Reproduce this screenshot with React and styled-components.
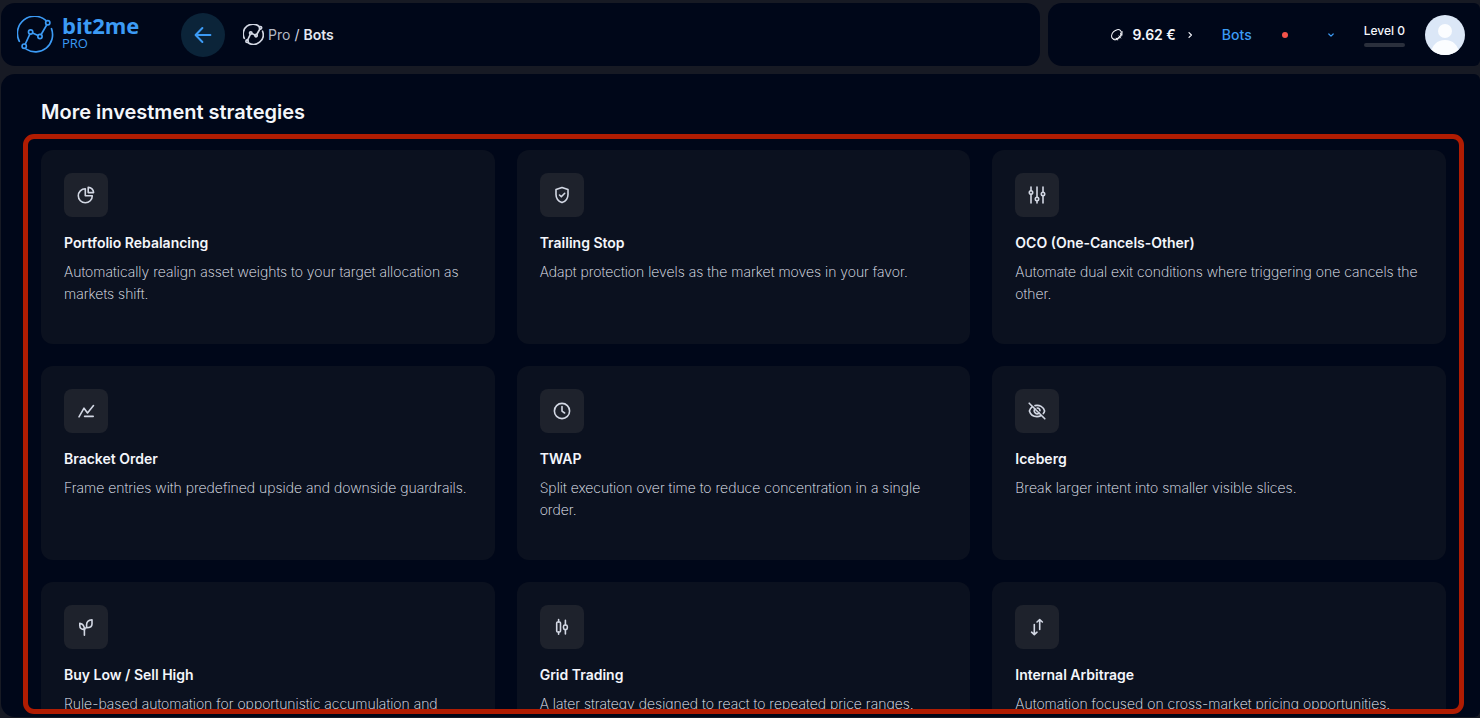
import React from "react";
import styled, { createGlobalStyle } from "styled-components";

const GlobalStyle = createGlobalStyle`
  * {
    box-sizing: border-box;
  }
  body {
    margin: 0;
    background-color: #171a24;
    color: #f4f6fb;
    font-family: Inter, "Noto Sans", sans-serif;
    font-size: 14px;
  }
  h1, h2, p, ul {
    margin: 0;
    padding: 0;
  }
  button {
    border: none;
    background: none;
    padding: 0;
    color: inherit;
    font: inherit;
    cursor: pointer;
  }
  a {
    color: inherit;
    text-decoration: none;
  }
`;

const MyPage = styled.div`
  display: flex;
  flex-direction: column;
  gap: 8px;
  height: 100vh;
  padding: 3px 0 1px 1px;
`;
const MyHeader = styled.header`
  display: grid;
  grid-template-columns: minmax(0, 1fr) 29.2%;
  gap: 8px;
`;
const MyBar = styled.div`
  display: flex;
  align-items: center;
  height: 63px;
  background-color: #000719;
  border-radius: 14px;
`;
const MyNavBar = styled(MyBar)`
  padding: 0 16px;
`;
const MyUserBar = styled(MyBar)`
  justify-content: flex-end;
  gap: 20px;
  padding-right: 15px;
  border-radius: 14px 6px 6px 14px;
`;
const MyLogo = styled.a`
  display: flex;
  align-items: center;
  gap: 8px;
  width: 164px;
  color: #3c9bf5;
`;
const MyLogoText = styled.span`
  display: flex;
  flex-direction: column;
  font-family: "Open Sans", "Noto Sans", sans-serif;
`;
const MyLogoName = styled.span`
  font-size: 22px;
  font-weight: 700;
  line-height: 16px;
`;
const MyLogoSub = styled.span`
  font-size: 13px;
  line-height: 20px;
`;
const MyBackButton = styled.button`
  display: flex;
  align-items: center;
  justify-content: center;
  width: 44px;
  height: 44px;
  border-radius: 50%;
  background-color: #0b2439;
  color: #3c9bf5;
`;
const MyCrumbs = styled.nav`
  display: flex;
  align-items: center;
  gap: 4px;
  margin-left: 18px;
  color: #d3d8e4;
`;
const MyCrumb = styled.a`
  color: ${(props) => (props.$current ? "#e4e8f0" : "#b4b9c4")};
  font-weight: ${(props) => (props.$current ? 600 : 400)};
`;
const MyWallet = styled.button`
  display: flex;
  align-items: center;
  gap: 10px;
  margin-right: 8px;
  font-weight: 600;
`;
const MyBotsLink = styled.a`
  color: #3c9bf5;
  font-weight: 500;
`;
const MyIconButton = styled.button`
  display: flex;
  align-items: center;
  justify-content: center;
  width: 26px;
  height: 24px;
  color: #3c9bf5;
`;
const MyDot = styled.span`
  width: 6px;
  height: 6px;
  border-radius: 50%;
  background-color: #f4534a;
`;
const MyLevel = styled.div`
  display: flex;
  flex-direction: column;
  gap: 4px;
  font-size: 12px;
  font-weight: 500;
  line-height: 16px;
`;
const MyLevelBar = styled.span`
  height: 4px;
  border-radius: 2px;
  background-color: #2a2f3c;
`;
const MyAvatar = styled.button`
  width: 40px;
  height: 40px;
  border-radius: 50%;
  overflow: hidden;
`;

const MyMain = styled.main`
  display: flex;
  flex-direction: column;
  flex: 1;
  min-height: 0;
  padding: 24px 16px 3px 22px;
  background-color: #000719;
  border-radius: 14px 6px 6px 14px;
`;
const MyTitle = styled.h1`
  margin-bottom: 8px;
  padding-left: 18px;
  font-size: 20px;
  font-weight: 600;
  line-height: 28px;
`;
const MyFrame = styled.section`
  flex: 1;
  min-height: 0;
  overflow: hidden;
  padding: 11px 13px;
  border: 5px solid #b01c02;
  border-radius: 11px;
`;
const MyGrid = styled.ul`
  display: grid;
  grid-template-columns: repeat(3, minmax(0, 1fr));
  gap: 22px;
  list-style: none;
`;
const MyCard = styled.li`
  min-height: 194px;
  padding: 23px 16px 23px 23px;
  border-radius: 12px;
  background-color: #0b111f;
`;
const MyTile = styled.div`
  display: flex;
  align-items: center;
  justify-content: center;
  width: 44px;
  height: 44px;
  margin-bottom: 16px;
  border-radius: 8px;
  background-color: #1e222c;
  color: #d3d8e4;
`;
const MyCardTitle = styled.h2`
  margin-bottom: 8px;
  font-size: 14px;
  font-weight: 600;
  line-height: 20px;
`;
const MyCardText = styled.p`
  color: #eceffa;
  font-weight: 200;
  line-height: 22px;
`;

const MyStroke = styled.svg`
  flex: none;
  fill: none;
  stroke: currentColor;
  stroke-linecap: round;
  stroke-linejoin: round;
`;

const icons = {
  pie: (
    <>
      <path d="M8.3 2.8A7 7 0 1 0 15.3 9.8H8.3Z" />
      <path d="M11.2 1.4A5.3 5.3 0 0 1 16.6 6.6H11.2Z" />
    </>
  ),
  shield: (
    <>
      <path d="M9 1.5 15 3.6V8.4C15 12.4 12.6 15.2 9 16.6 5.4 15.2 3 12.4 3 8.4V3.6Z" />
      <path d="M6.5 9 8.3 10.8 11.7 7.3" />
    </>
  ),
  sliders: (
    <>
      <path d="M3 1V4.6M3 8.4V17M9 1V11.1M9 14.9V17M15 1V6.1M15 9.9V17" />
      <circle cx="3" cy="6.5" r="1.7" />
      <circle cx="9" cy="13" r="1.7" />
      <circle cx="15" cy="8" r="1.7" />
    </>
  ),
  chart: <path d="M2 14.8 7 6.2 10.5 11 16.5 3.6M7.6 14.4H16.2" />,
  clock: (
    <>
      <circle cx="9" cy="9" r="7.6" />
      <path d="M9 4.6V9.2L11.6 11" />
    </>
  ),
  eyeOff: (
    <>
      <path d="M1.2 1.2 16.8 16.8" />
      <path d="M4.4 4.6C3 5.6 1.9 7.1 1.4 9 2.4 12.4 5.4 14.6 9 14.6 10.3 14.6 11.6 14.3 12.7 13.7" />
      <path d="M7 3.6C11.6 2.6 15.6 5 16.6 9 16.3 10 15.9 10.9 15.3 11.6" />
      <path d="M6.9 6.9A3 3 0 0 0 11.1 11.1M9.2 6A3 3 0 0 1 12 8.8" />
    </>
  ),
  seedling: (
    <>
      <path d="M7.4 17.2V10.6" />
      <path d="M7.4 12C7.4 10.4 8.2 9.8 9.6 9.8V6.6C9.6 4 11.6 2.2 15 1.8V6C15 8.6 13 9.8 9.6 9.8" />
      <path d="M7.4 11.4C7.4 8 5.8 5.8 2.8 5.2V7.4C2.8 9.6 4.6 11.4 7.4 11.4Z" />
    </>
  ),
  candles: (
    <>
      <path d="M5.6 1.6V4M5.6 14V16.2M12.4 2.4V7M12.4 12V16" />
      <rect x="3.7" y="4" width="3.8" height="10" rx="1" />
      <rect x="10.5" y="7" width="3.8" height="4.6" rx="1.6" />
    </>
  ),
  arrows: (
    <>
      <path d="M6.3 6.6V16.6M3.6 14.2 6.3 16.6 9 14.2" />
      <path d="M11.7 11.4V1.6M9 4 11.7 1.6 14.4 4" />
    </>
  ),
};

const strategies = [
  {
    icon: "pie",
    title: "Portfolio Rebalancing",
    descr:
      "Automatically realign asset weights to your target allocation as markets shift.",
  },
  {
    icon: "shield",
    title: "Trailing Stop",
    descr: "Adapt protection levels as the market moves in your favor.",
  },
  {
    icon: "sliders",
    title: "OCO (One-Cancels-Other)",
    descr:
      "Automate dual exit conditions where triggering one cancels the other.",
  },
  {
    icon: "chart",
    title: "Bracket Order",
    descr: "Frame entries with predefined upside and downside guardrails.",
  },
  {
    icon: "clock",
    title: "TWAP",
    descr: "Split execution over time to reduce concentration in a single order.",
  },
  {
    icon: "eyeOff",
    title: "Iceberg",
    descr: "Break larger intent into smaller visible slices.",
  },
  {
    icon: "seedling",
    title: "Buy Low / Sell High",
    descr: "Rule-based automation for opportunistic accumulation and",
  },
  {
    icon: "candles",
    title: "Grid Trading",
    descr: "A later strategy designed to react to repeated price ranges.",
  },
  {
    icon: "arrows",
    title: "Internal Arbitrage",
    descr: "Automation focused on cross-market pricing opportunities.",
  },
];

const BrandMark = ({ size, weight }) => (
  <MyStroke
    width={size}
    height={size}
    viewBox="0 0 38 38"
    strokeWidth={weight}
    aria-hidden="true"
  >
    <path d="M2.4 26A17.6 17.6 0 0 1 29.6 4.6" />
    <path d="M35.4 13A17.6 17.6 0 0 1 9.4 34" />
    <circle cx="31.6" cy="7" r="2.2" />
    <circle cx="14" cy="16.4" r="2.2" />
    <circle cx="23.6" cy="21" r="2.2" />
    <circle cx="7.4" cy="31" r="2.2" />
    <path d="M8.4 29 13.2 18.6M16 17.4 21.6 20M24.8 19 30.6 9" />
  </MyStroke>
);

const StrategyCard = ({ item }) => (
  <MyCard>
    <MyTile>
      <MyStroke width="18" height="18" viewBox="0 0 18 18" strokeWidth="1.6">
        {icons[item.icon]}
      </MyStroke>
    </MyTile>
    <MyCardTitle>{item.title}</MyCardTitle>
    <MyCardText>{item.descr}</MyCardText>
  </MyCard>
);

const App = () => {
  return (
    <MyPage>
      <GlobalStyle />
      <MyHeader>
        <MyNavBar>
          <MyLogo href="#">
            <BrandMark size={37} weight={1.7} />
            <MyLogoText>
              <MyLogoName>bit2me</MyLogoName>
              <MyLogoSub>PRO</MyLogoSub>
            </MyLogoText>
          </MyLogo>
          <MyBackButton aria-label="Back">
            <MyStroke width="18" height="18" viewBox="0 0 18 18" strokeWidth="2">
              <path d="M16.4 9H1.8M8.4 2 1.6 9 8.4 16" />
            </MyStroke>
          </MyBackButton>
          <MyCrumbs aria-label="Breadcrumb">
            <BrandMark size={21} weight={3} />
            <MyCrumb href="#">Pro</MyCrumb>
            <span>/</span>
            <MyCrumb href="#" $current>
              Bots
            </MyCrumb>
          </MyCrumbs>
        </MyNavBar>
        <MyUserBar>
          <MyWallet>
            <MyStroke width="12" height="12" viewBox="0 0 12 12">
              <ellipse cx="5.4" cy="5.4" rx="5.6" ry="3.9" transform="rotate(-45 5.4 5.4)" />
              <path d="M2 10.2C4.4 13 12.6 8 11 2.4M5.4 9.2 6.4 11M8 7 9.6 9M9.4 4.6 11.2 5.8" />
            </MyStroke>
            <span>9.62 €</span>
            <MyStroke width="8" height="8" viewBox="0 0 8 8" strokeWidth="1.2">
              <path d="M3 1.6 5.4 4 3 6.4" />
            </MyStroke>
          </MyWallet>
          <MyBotsLink href="#">Bots</MyBotsLink>
          <MyIconButton aria-label="Notifications">
            <MyDot />
          </MyIconButton>
          <MyIconButton aria-label="More">
            <MyStroke width="8" height="8" viewBox="0 0 8 8" strokeWidth="1.2">
              <path d="M1.8 3 4 5.2 6.2 3" />
            </MyStroke>
          </MyIconButton>
          <MyLevel>
            Level 0
            <MyLevelBar />
          </MyLevel>
          <MyAvatar aria-label="Account">
            <svg width="40" height="40" viewBox="0 0 40 40">
              <rect width="40" height="40" fill="#dbe7f7" />
              <circle cx="20" cy="16" r="7" fill="#fbfdff" />
              <path d="M5 40C7 30 12 25 20 25S33 30 35 40Z" fill="#fbfdff" />
            </svg>
          </MyAvatar>
        </MyUserBar>
      </MyHeader>
      <MyMain>
        <MyTitle>More investment strategies</MyTitle>
        <MyFrame>
          <MyGrid>
            {strategies.map((item) => (
              <StrategyCard key={item.title} item={item} />
            ))}
          </MyGrid>
        </MyFrame>
      </MyMain>
    </MyPage>
  );
};

export default App;
